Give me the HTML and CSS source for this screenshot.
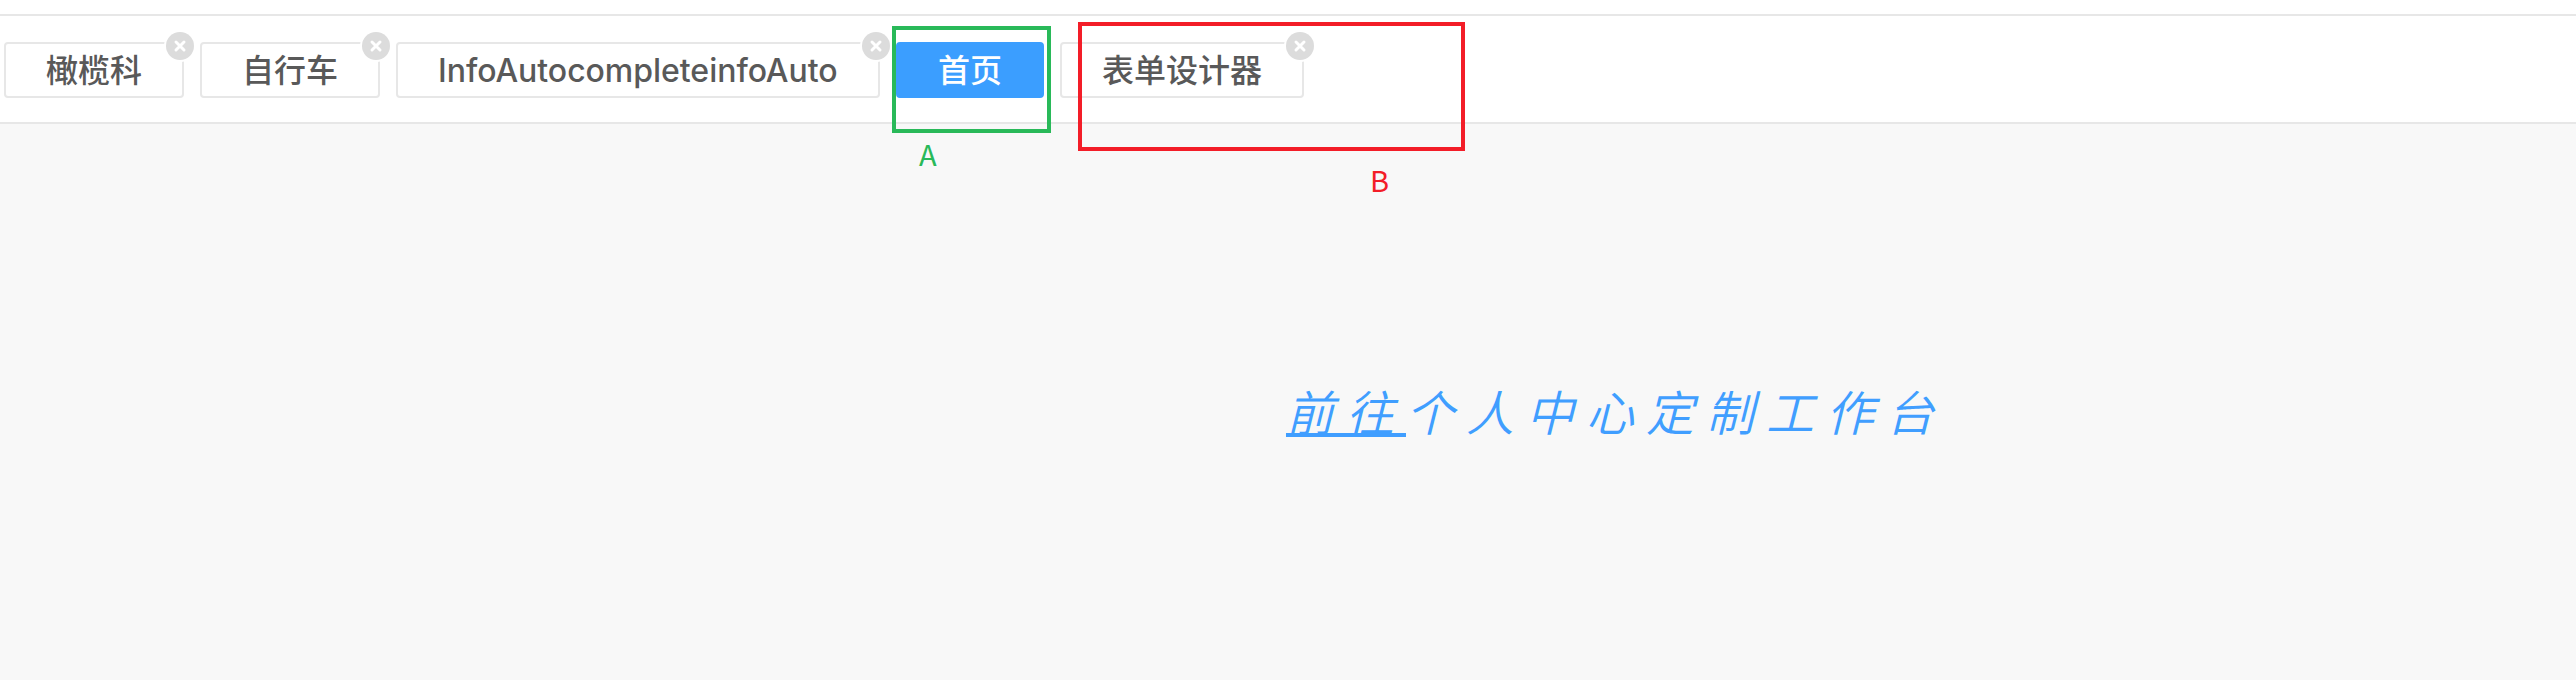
FILE: index.html
```html
<!DOCTYPE html>
<html lang="zh-CN">
<head>
<meta charset="utf-8">
<title>首页</title>
<link rel="stylesheet" href="styles.css">
</head>
<body>
<nav class="tabs">
  <div class="tab">橄榄科<span class="close"><svg viewBox="0 0 28 28"><path d="M10 10l8 8M18 10l-8 8"/></svg></span></div>
  <div class="tab">自行车<span class="close"><svg viewBox="0 0 28 28"><path d="M10 10l8 8M18 10l-8 8"/></svg></span></div>
  <div class="tab tab-latin"><span class="latin">InfoAutocompleteinfoAuto</span><span class="close"><svg viewBox="0 0 28 28"><path d="M10 10l8 8M18 10l-8 8"/></svg></span></div>
  <div class="tab active">首页</div>
  <div class="tab">表单设计器<span class="close"><svg viewBox="0 0 28 28"><path d="M10 10l8 8M18 10l-8 8"/></svg></span></div>
</nav>
<main class="workspace">
  <a class="guide"><span class="guide-go">前往</span>个人中心定制工作台</a>
</main>
<div class="mark mark-a"></div>
<div class="mark mark-b"></div>
<span class="label label-a">A</span>
<span class="label label-b">B</span>
</body>
</html>
```
FILE: styles.css
```css
* { box-sizing: border-box; }
body {
  margin: 0;
  height: 680px;
  padding-top: 14px;
  display: flex;
  flex-direction: column;
  position: relative;
  overflow: hidden;
  background: #fff;
  font-family: "Noto Sans CJK SC", sans-serif;
}
.tabs {
  display: flex;
  flex: none;
  gap: 16px;
  height: 110px;
  padding: 26px 4px 0;
  border-top: 2px solid #e7e7e7;
  border-bottom: 2px solid #e7e7e7;
}
.tab {
  position: relative;
  height: 56px;
  padding: 0 40px;
  border: 2px solid #e7e7e7;
  border-radius: 4px;
  background: #fff;
  color: #595959;
  font-size: 32px;
  font-weight: 500;
  line-height: 48px;
  white-space: nowrap;
}
.tab-latin { width: 484px; }
.latin {
  font-family: Inter, sans-serif;
  letter-spacing: -0.03px;
}
.active {
  border-color: #3b9eff;
  background: #3b9eff;
  color: #fff;
}
.close {
  position: absolute;
  top: -14px;
  right: -14px;
  width: 32px;
  height: 32px;
  padding: 2px;
  border-radius: 50%;
  background: #fff;
}
.close svg {
  display: block;
  border-radius: 50%;
  background: #dcdcdc;
  fill: none;
  stroke: #fff;
  stroke-width: 3;
  stroke-linecap: round;
}
.workspace {
  flex: 1;
  padding: 250px 0 0 656px;
  background: #f8f8f8;
  text-align: center;
}
.guide {
  color: #409eff;
  font-size: 48px;
  font-style: italic;
  font-weight: 350;
  letter-spacing: 12px;
  line-height: 72px;
}
.guide-go {
  text-decoration: underline;
  text-decoration-thickness: 4px;
  text-underline-offset: 2px;
  text-decoration-skip-ink: none;
}
.mark { position: absolute; border: 4px solid; }
.mark-a { left: 892px; top: 26px; width: 159px; height: 107px; color: #29b959; }
.mark-b { left: 1078px; top: 22px; width: 387px; height: 129px; color: #f31d28; }
.label { position: absolute; font-size: 29px; line-height: 40px; }
.label-a { left: 919px; top: 133px; color: #29b959; }
.label-b { left: 1370px; top: 159px; color: #f31d28; }
```
